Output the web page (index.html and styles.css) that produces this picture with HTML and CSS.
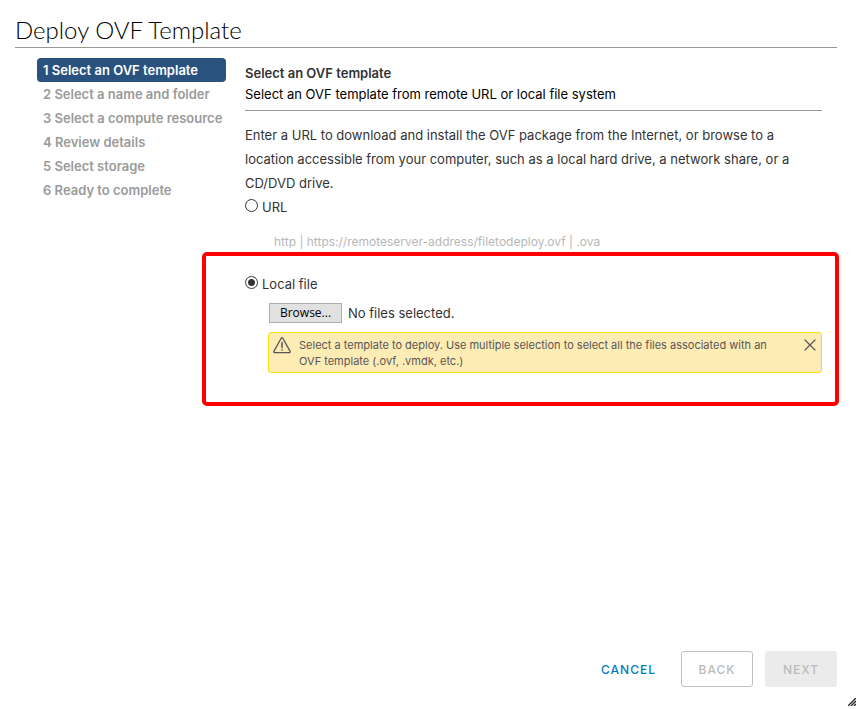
FILE: index.html
```html
<!DOCTYPE html>
<html lang="en">
<head>
    <meta charset="UTF-8">
    <meta name="viewport" content="width=device-width, initial-scale=1.0">
    <title>Deploy OVF Template</title>
    <link rel="stylesheet" href="styles.css">
</head>
<body>
    <div class="wizard">
        <h1 class="wizard-title">Deploy OVF Template</h1>

        <div class="wizard-body">
            <nav class="steps">
                <a class="step active" href="#step1">1 Select an OVF template</a>
                <a class="step" href="#step2">2 Select a name and folder</a>
                <a class="step" href="#step3">3 Select a compute resource</a>
                <a class="step" href="#step4">4 Review details</a>
                <a class="step" href="#step5">5 Select storage</a>
                <a class="step" href="#step6">6 Ready to complete</a>
            </nav>

            <main class="content">
                <header class="content-header">
                    <h2>Select an OVF template</h2>
                    <p>Select an OVF template from remote URL or local file system</p>
                </header>

                <p class="intro">Enter a URL to download and install the OVF package from the Internet, or browse to a location accessible from your computer, such as a local hard drive, a network share, or a CD/DVD drive.</p>

                <div class="option">
                    <input type="radio" name="source" id="sourceUrl">
                    <label for="sourceUrl">URL</label>
                </div>
                <input class="url-input" type="url" aria-label="URL" placeholder="http | https://remoteserver-address/filetodeploy.ovf | .ova">

                <section class="local">
                    <div class="option">
                        <input type="radio" name="source" id="sourceLocal" checked>
                        <label for="sourceLocal">Local file</label>
                    </div>
                    <div class="file-row">
                        <button type="button" class="browse" id="browseBtn">Browse...</button>
                        <label for="files" id="fileStatus">No files selected.</label>
                        <input type="file" id="files" multiple hidden>
                    </div>
                    <div class="alert">
                        <svg class="alert-icon" viewBox="0 0 18 18" width="18" height="18" fill="none" stroke="#565656" stroke-width="1.3" stroke-linecap="round" stroke-linejoin="round">
                            <path d="M8.2 1.2 1 14.1c-.4.8 0 1.6.9 1.6h14.2c.9 0 1.3-.8.9-1.6L9.8 1.2c-.4-.7-1.2-.7-1.6 0Z"/>
                            <path d="M9 5.6v4.8M9 12.8v.2" stroke-width="1.5"/>
                        </svg>
                        <p>Select a template to deploy. Use multiple selection to select all the files associated with an OVF template (.ovf, .vmdk, etc.)</p>
                        <button type="button" class="alert-close" aria-label="Close">
                            <svg viewBox="0 0 12 12" width="12" height="12" fill="none" stroke="#565656" stroke-width="1.2" stroke-linecap="round">
                                <path d="M1 1l10 10M11 1 1 11"/>
                            </svg>
                        </button>
                    </div>
                </section>
            </main>
        </div>

        <footer class="wizard-footer">
            <button type="button" class="btn btn-link">CANCEL</button>
            <button type="button" class="btn btn-outline" disabled>BACK</button>
            <button type="button" class="btn btn-primary" disabled>NEXT</button>
        </footer>

        <svg class="resize" viewBox="0 0 8 8" width="8" height="8" stroke="#222" stroke-width="1.3">
            <path d="M0 8 8 0M3 8l5-5M6 8l2-2"/>
        </svg>
    </div>

    <script>
        const files = document.getElementById('files');

        document.getElementById('browseBtn').onclick = () => files.click();

        files.onchange = () => {
            const names = Array.from(files.files).map(f => f.name);
            document.getElementById('fileStatus').textContent = names.join(', ') || 'No files selected.';
        };

        document.querySelector('.alert-close').onclick = () => {
            document.querySelector('.alert').remove();
        };
    </script>
</body>
</html>
```
FILE: styles.css
```css
* {
    box-sizing: border-box;
}
body {
    margin: 0;
    font-family: Inter, "Noto Sans", sans-serif;
    font-size: 13px;
    line-height: 24px;
    color: #333;
    background-color: #fff;
}
h1, h2, p {
    margin: 0;
}
button, input {
    font-family: inherit;
}
.wizard {
    position: relative;
    display: flex;
    flex-direction: column;
    min-height: 100vh;
    padding: 15px 22px 22px 15px;
}
.wizard-title {
    padding-bottom: 2px;
    border-bottom: 1px solid #999;
    font-family: Lato, sans-serif;
    font-size: 24px;
    font-weight: 300;
    line-height: 30px;
    color: #000;
}
.wizard-body {
    display: grid;
    grid-template-columns: 189px 1fr;
    gap: 19px;
    flex: 1;
    padding: 10px 15px 0 22px;
}
.steps {
    display: flex;
    flex-direction: column;
}
.step {
    padding: 0 6px;
    border-radius: 4px;
    font-weight: 600;
    color: #9a9a9a;
    text-decoration: none;
    white-space: nowrap;
}
.step.active {
    background-color: #29527f;
    color: #fff;
}
.content-header {
    padding: 5px 0;
    border-bottom: 1px solid #999;
    line-height: 21px;
    color: #000;
}
.content-header h2 {
    font-size: 13px;
    font-weight: 600;
    color: #333;
}
.intro {
    padding-top: 12px;
}
.option {
    display: flex;
    align-items: center;
    gap: 4px;
}
.option input {
    appearance: none;
    width: 13px;
    height: 13px;
    margin: 0 0 4px;
    border: 1px solid #333;
    border-radius: 50%;
}
.option input:checked {
    background: radial-gradient(circle, #333 3px, transparent 4px);
    outline: 1px dotted #777;
    outline-offset: -1px;
}
.url-input {
    display: block;
    width: 100%;
    height: 20px;
    margin: 12px 0 1px;
    padding: 0 29px;
    border: none;
    outline: none;
    background: none;
    font-size: 12px;
}
.url-input::placeholder {
    color: #b8b8b8;
}
/* frame runs out past the content column on both sides */
.local {
    margin: 0 -17px 0 -43px;
    padding: 16px 13px 29px 39px;
    border: 4px solid #f00;
    border-radius: 5px;
}
.file-row {
    display: flex;
    align-items: center;
    gap: 6px;
    margin: 7px 0 9px 24px;
    line-height: 20px;
}
.browse {
    width: 73px;
    height: 20px;
    padding: 0;
    border: 1px solid #adadad;
    background-color: #e1e1e1;
    font-family: "Open Sans", sans-serif;
    font-size: 12px;
    line-height: 18px;
    color: #000;
}
.alert {
    display: flex;
    align-items: flex-start;
    margin-left: 23px;
    padding: 4px 5px 3px 4px;
    border: 1px solid #ffdc0b;
    border-radius: 3px;
    background-color: #feecb5;
    font-size: 11px;
    line-height: 16px;
    color: #565656;
}
.alert p {
    flex: 1;
    padding: 0 24px 0 8px;
}
.alert-icon {
    flex: none;
}
.alert-close {
    display: flex;
    padding: 2px 0;
    border: none;
    background: none;
    cursor: pointer;
}
.wizard-footer {
    display: flex;
    justify-content: flex-end;
    gap: 12px;
}
.btn {
    min-width: 72px;
    height: 36px;
    padding: 0 12px;
    border: 1px solid transparent;
    border-radius: 3px;
    background: none;
    font-size: 12px;
    font-weight: 500;
    letter-spacing: 1px;
}
.btn-link {
    color: #007cbb;
    cursor: pointer;
}
.btn-outline {
    border-color: #c1c1c1;
    color: #bbb;
}
.btn-primary {
    background-color: #ebebeb;
    color: #bbb;
}
.resize {
    position: absolute;
    right: 3px;
    bottom: 3px;
}
```
